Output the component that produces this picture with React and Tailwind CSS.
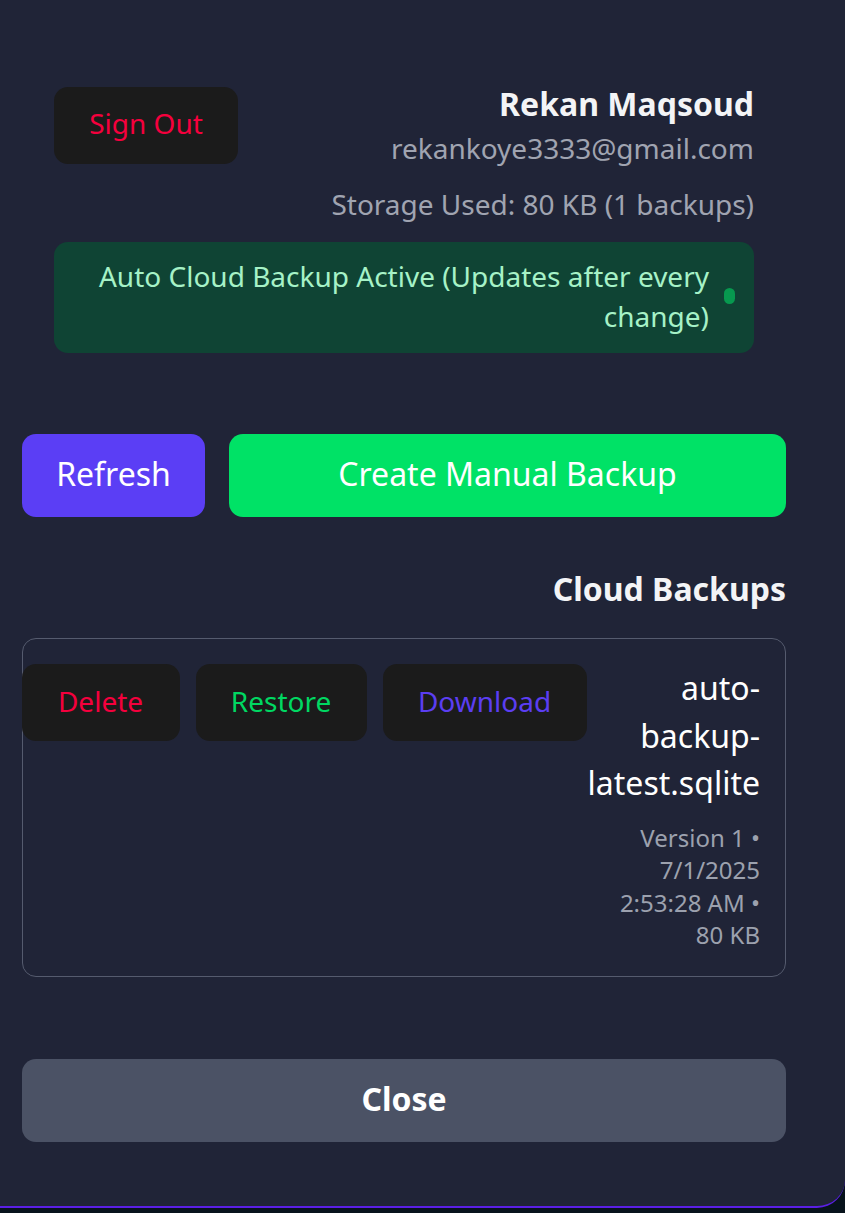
import React from 'react';

const BackupCard = () => (
    <div className="mt-[27px] border-[1.5px] border-[#555b6e] rounded-[14px] pt-[25px] pr-[25px] pb-[24px] flex items-start">
        {/* Actions */}
        <div className="flex gap-[16px] -ml-[1.5px]">
            <button className="h-[77px] w-[158px] pb-[4px] bg-[#1b1b1b] rounded-[14px] text-[28px] text-[#f5003d]">Delete</button>
            <button className="h-[77px] w-[171px] pb-[4px] bg-[#1b1b1b] rounded-[14px] text-[28px] text-[#00d862]">Restore</button>
            <button className="h-[77px] w-[204px] pb-[4px] bg-[#1b1b1b] rounded-[14px] text-[28px] text-[#5b3ef2]">Download</button>
        </div>

        {/* Fichier */}
        <div className="flex-1 min-w-0 text-right">
            <p className="text-[32px] leading-[47.5px] text-white break-words">auto-backup-latest.sqlite</p>
            <p className="mt-[15px] text-[24px] leading-[32.5px] text-[#9ca1ae] pl-[30px]">
                Version 1 • 7/1/2025 2:53:28 AM • 80 KB
            </p>
        </div>
    </div>
);

const App = () => {
    return (
        <div className="min-h-[1213px] bg-[#07131c]" style={{ fontFamily: '"Noto Sans", sans-serif' }}>
            <div className="w-[845px] h-[1208px] bg-[#202437] border-b-2 border-[#5b1fe6] rounded-br-[28px] pl-[22px] pr-[59px] pt-[82px]">
                {/* Profil utilisateur */}
                <div className="px-[32px]">
                    <div className="flex justify-between items-start">
                        <button className="mt-[5px] h-[77px] w-[184px] pb-[5px] bg-[#1b1b1b] rounded-[14px] text-[28px] text-[#f5003d]">
                            Sign Out
                        </button>
                        <div className="text-right">
                            <p className="text-[32px] leading-[44px] font-bold text-[#f3f4f6]">Rekan Maqsoud</p>
                            <p className="text-[28px] leading-[44px] text-[#a0a4b1]">rekankoye3333@gmail.com</p>
                            <p className="mt-[16px] text-[28px] leading-[36px] text-[#a0a4b1]">Storage Used: 80 KB (1 backups)</p>
                        </div>
                    </div>

                    {/* Statut de sauvegarde */}
                    <div className="mt-[20px] h-[111px] pb-[3px] bg-[#0f4434] rounded-[14px] flex items-center justify-end pl-[20px] pr-[19px] gap-[15px]">
                        <p className="text-[28px] leading-[40px] text-[#a6f2c7] text-right">
                            Auto Cloud Backup Active (Updates after every change)
                        </p>
                        <span className="w-[11px] h-[16px] rounded-full bg-[#07994f] shrink-0"></span>
                    </div>
                </div>

                {/* Boutons */}
                <div className="mt-[81px] flex gap-[24px]">
                    <button className="h-[83px] w-[183px] pb-[4px] bg-[#5b3ef5] rounded-[14px] text-[32px] text-white">Refresh</button>
                    <button className="h-[83px] flex-1 pb-[4px] bg-[#00e266] rounded-[14px] text-[32px] text-white">Create Manual Backup</button>
                </div>

                <h2 className="mt-[50px] text-right text-[32px] leading-[44px] font-bold text-[#f3f4f6]">Cloud Backups</h2>

                <BackupCard />

                <button className="mt-[82px] w-full h-[83px] pb-[2px] bg-[#4b5265] rounded-[14px] text-[32px] font-bold text-white">
                    Close
                </button>
            </div>
        </div>
    );
};

export default App;
